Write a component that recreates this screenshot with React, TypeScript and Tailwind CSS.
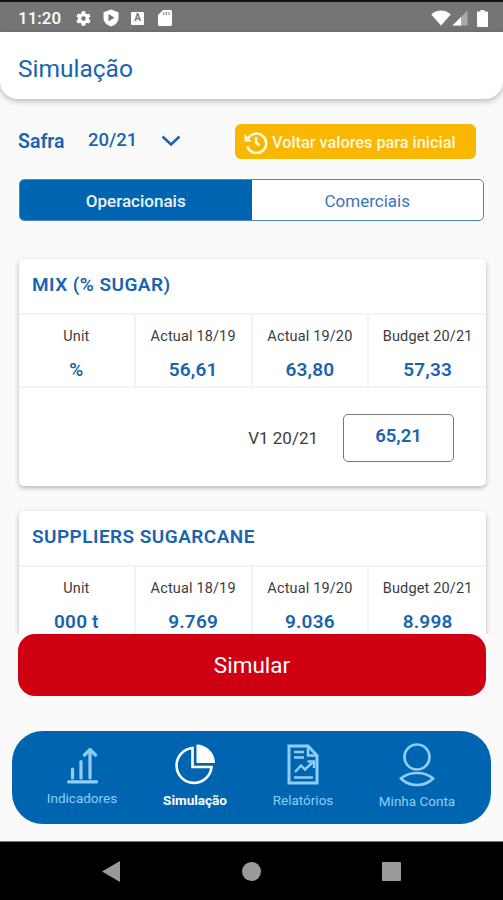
// Simulation screen: season picker, indicator cards and the bottom tab bar.

type Indicator = {
  title: string;
  values: { label: string; value: string }[];
  version?: string;
};

const indicators: Indicator[] = [
  {
    title: "MIX (% SUGAR)",
    values: [
      { label: "Unit", value: "%" },
      { label: "Actual 18/19", value: "56,61" },
      { label: "Actual 19/20", value: "63,80" },
      { label: "Budget 20/21", value: "57,33" },
    ],
    version: "65,21",
  },
  {
    title: "SUPPLIERS SUGARCANE",
    values: [
      { label: "Unit", value: "000 t" },
      { label: "Actual 18/19", value: "9.769" },
      { label: "Actual 19/20", value: "9.036" },
      { label: "Budget 20/21", value: "8.998" },
    ],
  },
];

function StatusBar() {
  return (
    <div className="flex h-8 shrink-0 items-center border-t-2 border-[#161616] bg-[#757575] pt-0.5 pl-[18px] pr-[15px] text-white">
      <span className="w-[57px] text-[17px] font-medium leading-none">11:20</span>
      <svg className="h-[17px] w-[17px]" viewBox="0 0 24 24" fill="currentColor">
        <path
          fillRule="evenodd"
          d="M19.6 13.1a8 8 0 0 0 0-2.2l2.5-1.9-2.4-4.2-3 1.2a8 8 0 0 0-1.8-1.1L14.5 1.7h-5l-.4 3.2a8 8 0 0 0-1.8 1.1l-3-1.2L1.9 9l2.5 1.9a8 8 0 0 0 0 2.2L1.9 15l2.4 4.2 3-1.2a8 8 0 0 0 1.8 1.1l.4 3.2h5l.4-3.2a8 8 0 0 0 1.8-1.1l3 1.2 2.4-4.2zM12 15.2a3.2 3.2 0 1 1 0-6.4 3.2 3.2 0 0 1 0 6.4z"
        />
      </svg>
      <svg className="ml-[11px] h-[18px] w-4" viewBox="0 0 16 18">
        <path fill="#fff" d="M8 .5 15.5 3.2V9c0 4-3 7-7.5 8.5C3.5 16 .5 13 .5 9V3.2z" />
        <path fill="#757575" d="M5.5 5 11.5 8.7l-6 3.5z" />
      </svg>
      <span className="ml-3 flex h-[13px] w-[13px] items-center justify-center rounded-[1px] bg-white text-[10px] font-bold leading-none text-[#757575]">
        A
      </span>
      <svg className="ml-[14px] h-4 w-[14px]" viewBox="0 0 14 16">
        <path fill="#fff" d="M5 0h7.5A1.5 1.5 0 0 1 14 1.5v13a1.5 1.5 0 0 1-1.5 1.5h-11A1.5 1.5 0 0 1 0 14.5V5z" />
        <path stroke="#999" strokeWidth="1.3" d="M5.7 2v3M8.4 2v3M11.1 2v3" />
      </svg>
      <svg className="ml-auto h-4 w-5" viewBox="0 0 20 16">
        <path fill="#fff" d="M10 15.5.2 4.4C3 1.7 6.3.5 10 .5s7 1.2 9.8 3.9z" />
      </svg>
      <svg className="ml-[1px] h-4 w-4" viewBox="0 0 16 16">
        <path fill="#a9a9a9" d="M15.5.5v15H.5z" />
        <path fill="#fff" d="M9 7v8.5H.5z" />
      </svg>
      <svg className="ml-[9px] h-[17px] w-[11px]" viewBox="0 0 11 17">
        <path fill="#fff" d="M3.5 0h4v1.5H10a1 1 0 0 1 1 1V16a1 1 0 0 1-1 1H1a1 1 0 0 1-1-1V2.5a1 1 0 0 1 1-1h2.5z" />
      </svg>
    </div>
  );
}

function IndicatorCard({ indicator }: { indicator: Indicator }) {
  return (
    <div className="h-[227px] shrink-0 rounded-[5px] bg-white shadow-[0_2px_5px_rgba(0,0,0,0.28)]">
      <h2 className="h-[54px] pt-3 pl-[13px] text-[19px] font-semibold leading-7 tracking-[0.45px] text-[#1a64ae]">
        {indicator.title}
      </h2>
      <div className="grid h-[75px] grid-cols-4 divide-x-2 divide-[#f3f3f3] border-y-2 border-[#f3f3f3] text-center">
        {indicator.values.map((item) => (
          <div key={item.label} className="pt-3">
            <p className="whitespace-nowrap text-[14.5px] leading-5 tracking-[0.15px] text-[#3c3c3c]">{item.label}</p>
            <p className="mt-[11px] text-[19px] font-semibold leading-6 tracking-[0.2px] text-[#1a64ae]">{item.value}</p>
          </div>
        ))}
      </div>
      {indicator.version && (
        <div className="flex items-center justify-end pt-[26px] pr-8">
          <span className="mr-[25px] pt-0.5 text-[17px] text-[#3c3c3c]">V1 20/21</span>
          <span className="flex h-12 w-[111px] items-center justify-center rounded-[5px] border border-[#777] pb-[3px] text-[18.5px] font-semibold text-[#1a64ae]">
            {indicator.version}
          </span>
        </div>
      )}
    </div>
  );
}

function TabBar() {
  return (
    <nav className="mx-3 mt-[35px] h-[93px] w-[479px] shrink-0 rounded-[31px] bg-[#0065b1] text-[13.5px] leading-4 text-[#8fcdf8]">
      <div className="flex h-full">
        <a className="ml-[25px] flex w-[90px] flex-col items-center pt-4">
          <svg className="h-[38px] w-8" viewBox="0 0 32 38" fill="none" stroke="currentColor" strokeWidth="3.2" strokeLinecap="round" strokeLinejoin="round">
            <path d="M2.5 34.8h28M6.5 31V22M15 31V14.5M24 31V3M18.5 8 24 2.5 29.5 8" />
          </svg>
          <span className="mt-[5px]">Indicadores</span>
        </a>
        <a className="ml-[22px] flex w-[92px] flex-col items-center pt-3 font-bold text-white">
          <svg className="h-[43px] w-[42px]" viewBox="0 0 42 43">
            <path d="M18.5 5A17.5 17.5 0 1 0 37.5 24H18.5z" fill="none" stroke="currentColor" strokeWidth="2.6" />
            <path d="M22.5 1.5a18.5 18.5 0 0 1 18.5 18.5H22.5z" fill="currentColor" />
          </svg>
          <span className="mt-1.5">Simulação</span>
        </a>
        <a className="ml-[17px] flex w-[90px] flex-col items-center pt-[13px]">
          <svg className="h-[41px] w-8" viewBox="0 0 32 41" fill="none" stroke="currentColor" strokeWidth="3">
            <path d="M2 2h19L30 11.5V39H2z" />
            <path d="M21 2v9.5h9" strokeWidth="2.5" />
            <path d="M7 8h10M7 13.5h10M7 33.5h19M8 28l6-6.5 4 4L26 18" strokeWidth="2.4" />
            <path d="M20.5 17.5H27V24" strokeWidth="2.4" />
          </svg>
          <span className="mt-[7px]">Relatórios</span>
        </a>
        <a className="ml-6 flex w-[90px] flex-col items-center pt-3">
          <svg className="h-[44px] w-9" viewBox="0 0 36 44" fill="none" stroke="currentColor" strokeWidth="2.7" strokeLinejoin="round">
            <circle cx="18" cy="14" r="12.5" />
            <path d="M1.8 35.5C6.5 31.5 12 30 18 30s11.5 1.5 16.2 5.5C29.5 40 24 42 18 42S6.5 40 1.8 35.5z" />
          </svg>
          <span className="mt-[6px] whitespace-nowrap">Minha Conta</span>
        </a>
      </div>
    </nav>
  );
}

export default function App() {
  return (
    <div className="flex h-[900px] w-[503px] flex-col overflow-hidden bg-[#fafafa] font-[Roboto,sans-serif]">
      <StatusBar />
      <header className="h-[67px] shrink-0 rounded-b-[18px] bg-white pt-5 pl-[18px] shadow-[0_2px_6px_rgba(0,0,0,0.28)]">
        <h1 className="text-[24.5px] leading-[34px] text-[#1a64ae]">Simulação</h1>
      </header>

      <div className="mt-[25px] flex h-[35px] shrink-0 items-center pl-[18px] pr-[27px] font-medium text-[#1a64ae]">
        <span className="w-[70px] text-[19.5px] font-semibold">Safra</span>
        <span className="w-[73px] pb-0.5 text-[18.5px]">20/21</span>
        <svg className="mb-0.5 h-3 w-5" viewBox="0 0 20 12" fill="none" stroke="currentColor" strokeWidth="2.5">
          <path d="m1.5 1.5 8.500 8 8.500-8" />
        </svg>
        <button className="ml-auto flex h-[35px] w-[241px] items-center rounded-[6px] bg-[#f9b700] pl-[9px] text-[16.3px] font-medium text-[#fff8e0]">
          <svg className="mr-1 h-6 w-6" viewBox="0 0 24 24" fill="none" stroke="currentColor" strokeWidth="2.6">
            <path d="M4 8.5A9.7 9.7 0 1 1 3.3 16.5" />
            <path d="M12 7v5.5l3.5 3" />
            <path d="M.5 4v7.500H8z" fill="currentColor" stroke="none" />
          </svg>
          <span className="whitespace-nowrap pt-[3px]">Voltar valores para inicial</span>
        </button>
      </div>

      <div className="mx-[19px] mt-5 grid h-[42px] shrink-0 grid-cols-2 overflow-hidden rounded-[5px] border border-[#4d85bf] bg-white text-[17px]">
        <button className="bg-[#0065b1] pt-[3px] font-medium text-[#eaf3fb]">Operacionais</button>
        <button className="pt-[3px] text-[#3a74b5]">Comerciais</button>
      </div>

      <main className="mt-7 flex h-[385px] shrink-0 flex-col gap-[25px] overflow-hidden pt-[10px] pl-[19px] pr-[17px]">
        {indicators.map((indicator) => (
          <IndicatorCard key={indicator.title} indicator={indicator} />
        ))}
      </main>

      <button className="ml-[18px] h-[62px] w-[468px] shrink-0 rounded-[17px] bg-[#d00013] pt-0.5 text-[22.5px] text-white">
        Simular
      </button>

      <TabBar />

      <div className="mt-[17px] flex h-[59px] shrink-0 items-center border-t border-[#777] bg-black pl-[102px] pr-[102px] text-[#9a9a9a]">
        <svg className="h-[21px] w-[18px]" viewBox="0 0 18 21" fill="currentColor">
          <path d="M18 0v21L0 10.5z" />
        </svg>
        <span className="ml-[122px] h-[19px] w-[19px] rounded-full bg-[#9a9a9a]" />
        <span className="ml-auto h-[19px] w-[19px] rounded-[1px] bg-[#9a9a9a]" />
      </div>
    </div>
  );
}
